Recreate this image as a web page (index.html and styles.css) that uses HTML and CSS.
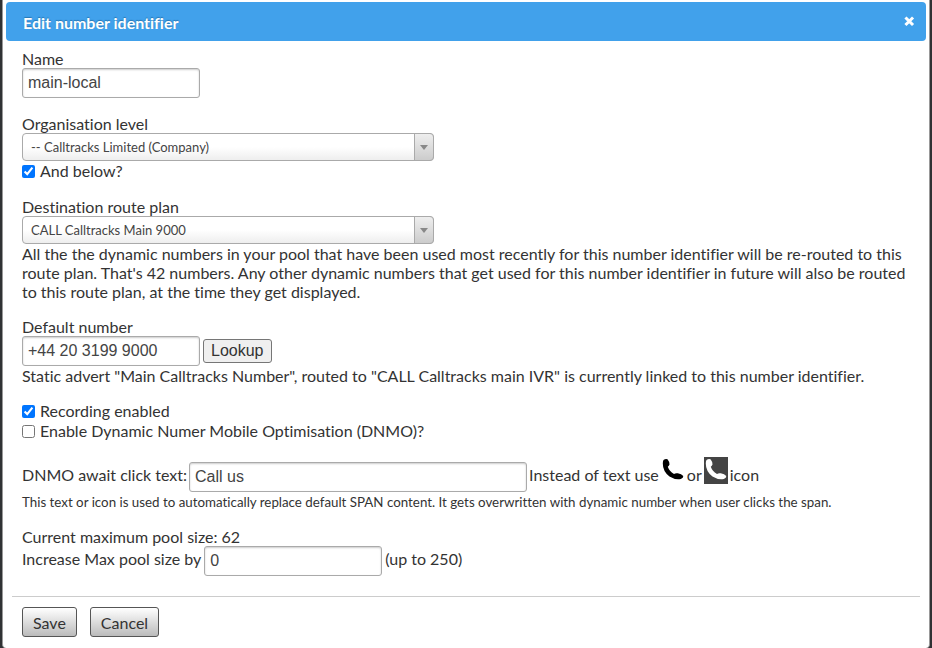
FILE: index.html
```html
<!DOCTYPE html>
<html lang="en">
<head>
<meta charset="utf-8">
<title>Edit number identifier</title>
<link rel="stylesheet" href="styles.css">
</head>
<body>
<main class="dialog" role="dialog" aria-labelledby="dialog-title">
  <header class="titlebar">
    <h1 id="dialog-title">Edit number identifier</h1>
    <button class="close" type="button" aria-label="Close">
      <svg viewBox="0 0 11 11" width="11" height="11" aria-hidden="true"><path d="M2.500 2.500 8 8M8 2.500 2.500 8"/></svg>
    </button>
  </header>
  <form class="form">
    <div class="fields">
      <section class="group">
        <label class="caption" for="name">Name</label>
        <input class="text" id="name" type="text" value="main-local">
      </section>
      <section class="group">
        <label class="caption" for="org">Organisation level</label>
        <div class="picker">
          <select id="org"><option>-- Calltracks Limited (Company)</option></select>
          <span class="arrow" aria-hidden="true"></span>
        </div>
        <label class="check"><input type="checkbox" checked> And below?</label>
      </section>
      <section class="group">
        <label class="caption" for="plan">Destination route plan</label>
        <div class="picker">
          <select id="plan"><option>CALL Calltracks Main 9000</option></select>
          <span class="arrow" aria-hidden="true"></span>
        </div>
        <p>All the the dynamic numbers in your pool that have been used most recently for this number identifier will be re-routed to this route plan. That's 42 numbers. Any other dynamic numbers that get used for this number identifier in future will also be routed to this route plan, at the time they get displayed.</p>
      </section>
      <section class="group">
        <label class="caption" for="number">Default number</label>
        <div class="row">
          <input class="text" id="number" type="text" value="+44 20 3199 9000">
          <button class="lookup" type="button">Lookup</button>
        </div>
        <p>Static advert "Main Calltracks Number", routed to "CALL Calltracks main IVR" is currently linked to this number identifier.</p>
      </section>
      <section class="group">
        <label class="check"><input type="checkbox" checked> Recording enabled</label>
        <label class="check"><input type="checkbox"> Enable Dynamic Numer Mobile Optimisation (DNMO)?</label>
      </section>
      <section class="group">
        <div class="row icons-row">
          <label for="click-text">DNMO await click text:</label>
          <input class="text wide" id="click-text" type="text" value="Call us">
          <span>Instead of text use</span>
          <svg class="phone" viewBox="0 0 24 27" width="24" height="27" role="img" aria-label="Black phone"><path d="M2.500 3Q4.500 1.500 6.500 2.200Q8.500 4.500 8.500 7.500Q8 9 6.800 9.700Q8.200 14 13 17Q14.500 15.800 16.800 16.300Q20.500 17 22.300 19Q22.500 21 19.800 22Q14 23 8.500 19.500Q1.800 14.500 1.800 6.500Q1.800 4 2.500 3Z"/></svg>
          <span>or</span>
          <svg class="phone boxed" viewBox="0 0 24 27" width="24" height="27" role="img" aria-label="White phone"><path d="M2.500 3Q4.500 1.500 6.500 2.200Q8.500 4.500 8.500 7.500Q8 9 6.800 9.700Q8.200 14 13 17Q14.500 15.800 16.800 16.300Q20.500 17 22.300 19Q22.500 21 19.800 22Q14 23 8.500 19.500Q1.800 14.500 1.800 6.500Q1.800 4 2.500 3Z"/></svg>
          <span>icon</span>
        </div>
        <p class="hint">This text or icon is used to automatically replace default SPAN content. It gets overwritten with dynamic number when user clicks the span.</p>
      </section>
      <section class="group">
        <p>Current maximum pool size: 62</p>
        <div class="row">
          <label for="increase">Increase Max pool size by</label>
          <input class="text" id="increase" type="text" value="0">
          <span>(up to 250)</span>
        </div>
      </section>
    </div>
    <footer class="actions">
      <button type="submit">Save</button>
      <button type="button">Cancel</button>
    </footer>
  </form>
</main>
</body>
</html>
```
FILE: styles.css
```css
* { box-sizing: border-box; }
body {
  margin: 0;
  padding: 0 2px;
  background: #303234;
  color: #333;
  font: 16px/19px Lato, sans-serif;
  font-variant-ligatures: none;
}
.dialog {
  min-height: 100vh;
  padding: 2px 3px 0;
  border: 0 solid #999;
  border-width: 0 1px;
  border-radius: 0 0 4px 4px;
  background: #fff;
}
.titlebar {
  display: flex;
  align-items: center;
  justify-content: space-between;
  height: 39px;
  padding: 0 11px 0 17px;
  border-radius: 4px;
  background: #41a1eb;
  color: #fff;
}
h1 {
  margin: 0;
  padding-top: 2px;
  font-size: 16px;
  text-shadow: 0 -1px 1px #2878b4;
}
p { margin: 0; }
.close { display: flex; padding: 0; border: 0; background: none; }
.close path { fill: none; stroke: #fff; stroke-width: 3; stroke-linecap: square; }
.fields {
  display: flex;
  flex-direction: column;
  gap: 16px;
  padding: 8px 16px 20px;
}
.caption { display: block; }
.text {
  display: block;
  width: 178px;
  height: 30px;
  padding: 0 5px;
  border: 1px solid #aaa;
  border-radius: 3px;
  background: #fff;
  box-shadow: inset 0 1px 2px #ccc;
  color: #444;
  font: 16px "Liberation Sans", sans-serif;
}
.wide { width: 338px; }
.picker {
  display: grid;
  width: 412px;
  max-width: 100%;
  height: 28px;
}
.picker select, .arrow { grid-area: 1 / 1; }
.picker select {
  appearance: none;
  padding: 0 28px 0 8px;
  border: 1px solid #aaa;
  border-radius: 4px;
  background: linear-gradient(#fff 50%, #eee);
  color: #444;
  font: 13px Lato, sans-serif;
  font-variant-ligatures: none;
}
.arrow {
  display: flex;
  align-items: center;
  justify-content: center;
  justify-self: end;
  width: 20px;
  border: 1px solid #aaa;
  border-radius: 0 4px 4px 0;
  background: linear-gradient(#eee, #ccc);
  pointer-events: none;
}
.arrow::before {
  content: "";
  border: solid transparent;
  border-width: 5px 4px 0;
  border-top-color: #888;
}
.check {
  display: flex;
  align-items: center;
  gap: 5px;
  height: 20px;
  padding-bottom: 1px;
}
.check input { width: 13px; height: 13px; margin: 1px 0 0; accent-color: #0075ff; }
.row { display: flex; align-items: center; gap: 3px; }
.row label, .row span { padding-bottom: 5px; }
.lookup {
  height: 24px;
  padding: 0 7px;
  border: 1px solid #767676;
  border-radius: 3px;
  background: #efefef;
  color: #333;
  font: 16px "Liberation Sans", sans-serif;
}
.icons-row { align-items: flex-end; gap: 2px; height: 35px; }
.icons-row label, .icons-row span { padding-bottom: 8px; }
.phone { align-self: flex-start; fill: #000; }
.boxed { background: #444; fill: #fff; }
.hint { padding: 2px 0 1px; font-size: smaller; line-height: 16px; }
.actions {
  display: flex;
  gap: 13px;
  margin: 0 6px;
  padding: 10px 10px 11px;
  border-top: 1px solid #ccc;
}
.actions button {
  height: 30px;
  padding: 1px 10px 0;
  border: 1px solid #555;
  border-radius: 3px;
  background: linear-gradient(#fff, #bbb);
  color: #333;
  font: 16px Lato, sans-serif;
}
```
